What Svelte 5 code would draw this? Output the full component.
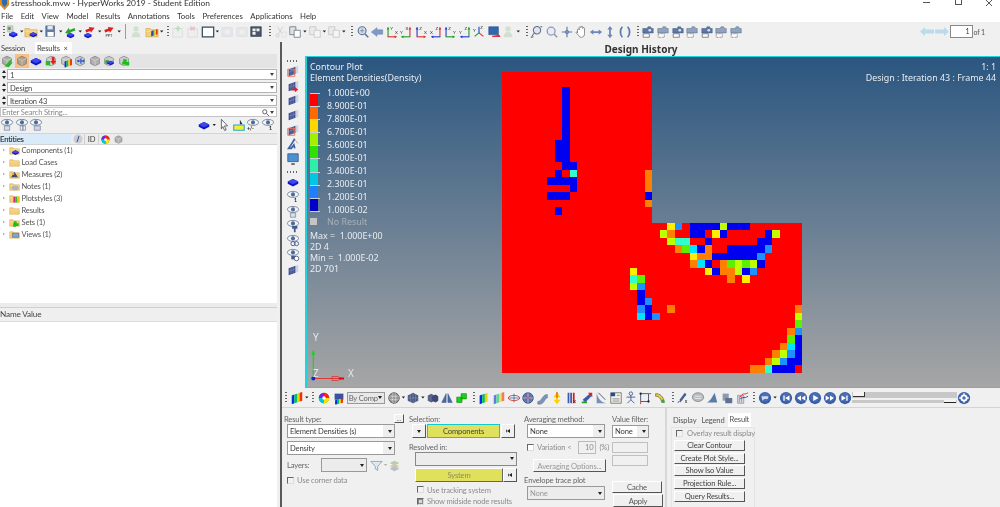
<script>
  // Small icon fragments, all drawn in a 16x16 box
  const cube = (c = '#9a9a9a') =>
    `<path d="M3 5l5-2.500L13 5v6l-5 2.500L3 11z" fill="${c}" stroke="#5c5c5c" stroke-width=".6"/><path d="M3 5l5 2.500L13 5M8 7.500v6" fill="none" stroke="#e8e8e8" stroke-width=".6"/>`;
  const blob = `<path d="M8 4.500l6 3V10l-6 3-6-3V7.500z" fill="#1414c8"/><path d="M8 4.500l6 3-6 3-6-3z" fill="#3a48ee"/>`;
  const folder = `<path d="M1 4h5l1 1.500h8v8H1z" fill="#f4cd76" stroke="#c99b3c" stroke-width=".6"/><path d="M1 7h14" stroke="#fbe6b0" stroke-width=".8"/>`;
  const eye = `<ellipse cx="8" cy="5" rx="6.400" ry="3.400" fill="#f4f6fa" stroke="#64748c" stroke-width=".9"/><circle cx="8" cy="5" r="2.300" fill="#4c6a9c"/>`;
  const axes = (a, b, la, lb) =>
    `<path d="M3.500 13.500V3" stroke="${a}" fill="none" stroke-width="1.300"/><path d="M2 5l1.500-3L5 5z" fill="${a}"/><path d="M3 13.500h9.500" stroke="${b}" stroke-width="1.300"/><path d="M11 12l3 1.500-3 1.500z" fill="${b}"/><text x="6" y="6" font-size="5" fill="#333">${la}</text><text x="11.500" y="10" font-size="5" fill="#333">${lb}</text>`;
  const mirrored = (a, b, la, lb) =>
    `<path d="M12.500 13.500V3" stroke="${a}" fill="none" stroke-width="1.300"/><path d="M11 5l1.500-3L14 5z" fill="${a}"/><path d="M13 13.500H3.500" stroke="${b}" stroke-width="1.300"/><path d="M5 12l-3 1.500L5 15z" fill="${b}"/><text x="7.500" y="6" font-size="5" fill="#333">${la}</text><text x="1" y="10" font-size="5" fill="#333">${lb}</text>`;
  const plate = `<path d="M3 6l8-3v8l-8 3z" fill="#3f4f90"/><path d="M5.700 5v8M8.300 4v8M3 9.500l8-3" stroke="#9aa6d0" stroke-width=".5"/><path d="M11 3l3-1v8l-3 1" fill="#cfd3de"/>`;
  const camera = `<path d="M2 4h5l1-2h3l1 2h2v5H2z" fill="#5c79a6" stroke="#3a4f70" stroke-width=".5"/><circle cx="10" cy="6" r="1.500" fill="#dde5f2"/><path d="M2.500 10h7v4h-7z" fill="#fff" stroke="#444" stroke-width=".7"/>`;
  const round = (inner) =>
    `<circle cx="8" cy="8" r="7" fill="#3a5fa8"/><circle cx="8" cy="7" r="5" fill="#5a7cc0" opacity=".5"/>${inner}`;
  const wheel = `<circle cx="8" cy="8" r="6" fill="#00c000"/><path d="M8 8V2a6 6 0 0 1 6 6z" fill="#ff2020"/><path d="M8 8h6a6 6 0 0 1-6 6z" fill="#ffe000"/><path d="M8 8v6a6 6 0 0 1-6-6z" fill="#00c8e0"/><path d="M8 8H2a6 6 0 0 1 6-6z" fill="#8020e0"/><circle cx="8" cy="8" r="2" fill="#fff"/>`;
  const bars = `<path d="M2 5l3-1v10l-3 1z" fill="#0030e0"/><path d="M5 4l3-1v10l-3 1z" fill="#00c060"/><path d="M8 3l3-1v10l-3 1z" fill="#f0d000"/><path d="M11 2l3-1v10l-3 1z" fill="#f03000"/>`;

  const icons = {
    model: `<path d="M3 1h6v7H3z" fill="#d7ddd3" stroke="#8a8f86" stroke-width=".5"/><circle cx="5" cy="4" r="2" fill="#60a060"/><g transform="translate(3 4) scale(.8)">${blob}</g>`,
    folderModel: `${folder}<g transform="translate(5 5) scale(.7)">${blob}</g>`,
    save: `<path d="M2 1h10v12H2z" fill="#5f7fa8" stroke="#3a4d6c" stroke-width=".6"/><path d="M4 1h6v4H4z" fill="#e4e8ee"/><path d="M4 8h7v5H4z" fill="#fff"/>`,
    arrowG: `<path d="M2 7l6-4v2.500h6v3H8V11z" fill="#2aa52a" transform="rotate(-20 8 7)"/><g transform="translate(3 6) scale(.7)">${blob}</g>`,
    arrowR: `<path d="M14 5L8 2v2H3v3h5v2z" fill="#e02020" transform="rotate(-20 8 6)"/><g transform="translate(0 6) scale(.7)">${blob}</g>`,
    ppt: `<path d="M14 5L8 2v2H3v3h5v2z" fill="#e02020" transform="rotate(-20 8 6)"/><text x="4" y="14" font-size="4.500" fill="#333">PPT</text>`,
    person: `<circle cx="8" cy="4.500" r="3" fill="#9cc49c"/><path d="M3 14c0-4 2-6 5-6s5 2 5 6z" fill="#9cc49c"/>`,
    folderColor: `${folder}<g transform="translate(6 4) scale(.6)">${bars}</g>`,
    plus: `<path d="M2 4h11v10H2z" fill="#e8efe8" stroke="#9ab09a" stroke-width=".7"/><path d="M8 1v6M5 4h6" stroke="#58b058" stroke-width="1.800"/>`,
    minus: `<path d="M2 4h11v10H2z" fill="#efe8e8" stroke="#b09a9a" stroke-width=".7"/><path d="M5 2l5 4M10 2L5 6" stroke="#d85858" stroke-width="1.800"/>`,
    frame: `<path d="M1.500 2.500h13v11h-13z" fill="#fff" stroke="#33475f" stroke-width="1.400"/>`,
    blank: `<path d="M2 3h12v10H2z" fill="#d4dae2" stroke="#a6aeb8" stroke-width=".7"/><path d="M6 6h4v4H6z" fill="#f2f4f6"/>`,
    panes: `<path d="M2 2h12v11H2z" fill="#4c5868" stroke="#222a36" stroke-width=".7"/><path d="M4 4h3.500v3H4zM8.500 4H12v3H8.500zM4 8h3.500v3H4z" fill="#eef2f6"/>`,
    cut: `<path d="M4 2l5 8M10 2L5 10" stroke="#8a8a8a"/><circle cx="4" cy="12" r="1.800" fill="none" stroke="#8a8a8a"/><path d="M9 8h5v6H9z" fill="#eee" stroke="#aaa" stroke-width=".6"/>`,
    copy: `<path d="M2 2h7v9H2z" fill="#dfe3e8" stroke="#59626e" stroke-width=".8"/><path d="M7 6h7v8H7z" fill="#fff" stroke="#59626e" stroke-width=".8"/>`,
    magnify: `<circle cx="7" cy="6.500" r="4.500" fill="#d4dce8" stroke="#5e7596" stroke-width="1.300"/><path d="M10 10l4 4" stroke="#5e7596" stroke-width="1.800"/><path d="M4.500 6.500h5M7 4v5" stroke="#5e7596" stroke-width=".7"/>`,
    back: `<path d="M1.500 8L8 3v2.500h6.500v5H8V13z" fill="#7f9ac8" stroke="#5f7aa8" stroke-width=".5"/>`,
    xyYX: axes('#20a020', '#e03030', 'Y', 'X'),
    yxXY: mirrored('#e03030', '#20a020', 'X', 'Y'),
    zxZX: axes('#2040d0', '#e03030', 'Z', 'X'),
    xzZX: mirrored('#e03030', '#2040d0', 'Z', 'X'),
    zyZY: axes('#2040d0', '#20a020', 'Z', 'Y'),
    yzZY: mirrored('#20a020', '#2040d0', 'Z', 'Y'),
    iso: `<path d="M8 9V2" stroke="#2040d0" stroke-width="1.300"/><path d="M8 9l-5 4" stroke="#20a020" stroke-width="1.300"/><path d="M8 9l5 4" stroke="#e03030" stroke-width="1.300"/><text x="9.500" y="5" font-size="5" fill="#333">Z</text><text x="1" y="8" font-size="5" fill="#333">Y</text>`,
    screenArrow: `<path d="M2 2h11v9H2z" fill="#2d68b0" stroke="#1c4274" stroke-width=".6"/><path d="M6 13h9l-2-2v1z" fill="#e02020" stroke="#e02020"/>`,
    zoomFit: `<circle cx="8" cy="6" r="4.200" fill="#dfe5ee" stroke="#60708a" stroke-width="1.200"/><path d="M5 9l-3 4M1 14l3-.5M12 2h2" stroke="#444" stroke-width="1"/>`,
    zoomBox: `<circle cx="7" cy="7" r="4.500" fill="#e8ecf2" stroke="#8a9ab4" stroke-width="1.500"/><path d="M10.500 10.500l3.500 3.500" stroke="#8a9ab4" stroke-width="1.800"/>`,
    cross: `<path d="M8 2v12M2 8h12" stroke="#5a7cac" stroke-width="1.300"/><circle cx="8" cy="8" r="2" fill="none" stroke="#5a7cac"/>`,
    hand: `<path d="M4 9V5.500a1 1 0 0 1 2 0V3a1 1 0 0 1 2 0v-.5a1 1 0 0 1 2 0V4a1 1 0 0 1 2 0v6c0 2-1 4-3.500 4S6 13 5 11.500L2.500 9c-.6-1 .8-1.600 1.500 0z" fill="#fff" stroke="#666" stroke-width=".8"/>`,
    leftRight: `<path d="M1 8l4-3v2h6V5l4 3-4 3V9H5v2z" fill="#6a88b8"/>`,
    upDown: `<path d="M8 1l3 4H9v6h2l-3 4-3-4h2V5H5z" fill="#6a88b8"/>`,
    rotate: `<path d="M5 2C2 5 2 11 5 14M11 2c3 3 3 9 0 12" fill="none" stroke="#5a7cac" stroke-width="2"/>`,
    camera,
    cameraPlain: `<path d="M2 4h5l1-2h3l1 2h2v5H2z" fill="#8fa3c0" stroke="#4a5c78" stroke-width=".5"/><path d="M2.500 10h7v4h-7z" fill="#fff" stroke="#444" stroke-width=".7" stroke-dasharray="1 .6"/>`,
    check: `${cube('#a8b0a4')}<path d="M5 14l8-8-1 5 3-2-5 6z" fill="#30b030"/>`,
    cubeOn: cube('#b0a090'),
    cubeBlob: blob,
    cubeDown: `${cube('#c8c8c8')}<path d="M9 3h3v5h2l-3.500 4L7 8h2z" fill="#e02020"/><path d="M2 8h5v5H2z" fill="#20c020"/>`,
    colorCube: `${cube('#c8c8c8')}<g transform="translate(5 5) scale(.7)">${bars}</g>`,
    tree: `${cube('#c0c4c8')}<path d="M6 8h6M9 5v6" stroke="#2a5ad0" stroke-width="1.400"/><circle cx="6" cy="8" r="1.300" fill="#2a5ad0"/><circle cx="12" cy="8" r="1.300" fill="#2a5ad0"/>`,
    cubeGrey: cube('#b0b0b0'),
    cubeMix: `${cube('#c8c8c8')}<circle cx="6" cy="9" r="2.500" fill="#40a040"/><g transform="translate(5 5) scale(.6)">${blob}</g>`,
    cubeGreen: `${cube('#c8c8c8')}<path d="M7 6h4v3h3v4h-4v-1H6V9h1z" fill="#18c018"/>`,
    eye1: `${eye}<path d="M5 9h6v5H5z" fill="#d8dfe8" stroke="#4c6080" stroke-width=".6"/>`,
    eye2: `${eye}<path d="M6 9h3v5H6zM9 9h3v5H9z" fill="#eef1f5" stroke="#5a6a84" stroke-width=".6"/>`,
    eye3: `${eye}<path d="M6 9h7v5H6z" fill="#cdd6e2" stroke="#5a6a84" stroke-width=".6"/>`,
    eyeSolid: `${eye}<path d="M7 8h6v3h-2v4H9v-4H7z" fill="#45598a"/>`,
    eyeRings: `${eye}<circle cx="8" cy="11" r="2.400" fill="none" stroke="#45598a"/><circle cx="12" cy="11" r="2.400" fill="none" stroke="#45598a"/>`,
    eyeStack: `${eye}<path d="M6 9h5v4H6z" fill="#45598a"/><circle cx="12" cy="12" r="2.600" fill="#fff" stroke="#45598a"/>`,
    eyeOne: `${eye}<text x="9" y="14" font-size="6" font-weight="700" fill="#222">1</text>`,
    eyePm: `${eye}<text x="1" y="14" font-size="6" font-weight="700" fill="#222">+/-</text>`,
    cursor: `<path d="M5 1.500l7 7.500H8.500l2 4.500-1.800.8-2-4.500L5 12.500z" fill="#fff" stroke="#445" stroke-width=".9"/>`,
    yellowBox: `<path d="M2 8h12v6H2z" fill="#f4ee30" stroke="#20a8d8" stroke-width="1.200"/><path d="M9 2l3 5H9z" fill="#20303a"/>`,
    plateOutline: `${plate}<path d="M2 6h8v8H2z" fill="none" stroke="#f07050" stroke-width="1.100"/>`,
    plateArrow: `${plate}<path d="M6 11h4V9l4 3-4 3v-2H6z" fill="#e02020"/>`,
    plate,
    runner: `<path d="M10 2l-3 5-4 6h3l3-4 1 4" fill="none" stroke="#3b62a8" stroke-width="2"/><path d="M10 3l4 5" stroke="#e04040" stroke-dasharray="1 1"/>`,
    monitor: `<path d="M2 2h12v9H2z" fill="#4c90d0" stroke="#2c4c70" stroke-width=".8"/><path d="M6 13h4v1.500H6z" fill="#334"/>`,
    colorbars: bars,
    wheel,
    stack: `<path d="M3 3h10v7H3z" fill="#3c4fa0"/><g transform="translate(2 8) scale(.75 .5)">${bars}</g>`,
    meshSphere: `<circle cx="8" cy="8" r="6" fill="#d8d8d8" stroke="#555"/><path d="M2 8h12M8 2v12M3.500 4.500h9M3.500 11.500h9M4.500 3v10M11.500 3v10" stroke="#555" stroke-width=".6"/>`,
    solidSphere: `<path d="M8 2l6 3v6l-6 3-6-3V5z" fill="#4a5a80"/><path d="M2 8h12M8 2v12M5 3.500v9M11 3.500v9" stroke="#9aa8c4" stroke-width=".5"/>`,
    blueStack: `<path d="M2 5l4-2 4 2v6l-4 2-4-2z" fill="#5a6488"/><path d="M7 6l4-2 3 2v5l-3 2-4-2z" fill="#3c4a78"/>`,
    split: `<path d="M7 3v10H2zM9 3v10h5z" fill="#4a6ab0" stroke="#28406c" stroke-width=".5"/>`,
    greenCubes: `<path d="M2 7h6v6H2zM7 3h6v6H7z" fill="#14d414" stroke="#0a800a" stroke-width=".7"/>`,
    barsRaised: `<path d="M3 5l3-1v10l-3 1z" fill="#0030e0"/><path d="M6 4l3-1v10l-3 1z" fill="#00c060"/><path d="M9 3l3-1v10l-3 1z" fill="#f0d000"/>`,
    barsPale: `<g opacity=".6">${bars}</g>`,
    disc: `<ellipse cx="8" cy="8" rx="6.500" ry="3" fill="#e8eef6" stroke="#e04030"/><path d="M8 3v10M2 8h12" stroke="#3a5a98" stroke-width=".8"/>`,
    ball: `<circle cx="8" cy="8" r="6" fill="#5a78b8" stroke="#34507c"/><path d="M2 8h12M8 2v12" stroke="#dde" stroke-width=".7"/><path d="M4 5l8 6M4 11l8-6" stroke="#e04030" stroke-width=".7"/>`,
    pipe: `<path d="M2 12c5 0 5-8 11-8v4c-3 0-3 6-8 7H2z" fill="#7c94bc" stroke="#4a5e80" stroke-width=".5"/>`,
    bolt: `<path d="M8 1l4 6H9v3h3l-4 5-4-5h3V7H4z" fill="#ffd000"/><path d="M8 1v7" stroke="#e02020"/>`,
    barsX: `<path d="M3 2h2v12H3zM6 2h2v12H6z" fill="#3c5ab0"/><path d="M9 2h2v12H9z" fill="#d02020"/><text x="9.500" y="14" font-size="5" fill="#222">X</text>`,
    arrowsMix: `<path d="M3 10l8-7 2 3-7 7z" fill="#3c5ab0"/><path d="M9 2h5v5z" fill="#e02020"/><path d="M2 12h6v2H2z" fill="#20a020"/>`,
    dish: `<path d="M3 2c2 8 6 11 11 12L3 14z" fill="#7a90b4"/><path d="M5 2l8 8" stroke="#3a4c70"/>`,
    note: `<path d="M2 2h12v12H2z" fill="#f2f2ea" stroke="#555" stroke-width=".8"/><path d="M2 2h5v4H2z" fill="#2a4a90"/><path d="M9 5h3M4 9h8M4 11.500h8" stroke="#666" stroke-width=".8"/>`,
    stickman: `<circle cx="9" cy="3" r="2" fill="none" stroke="#3a5a98"/><path d="M9 5v5l-4 4M9 10l4 4M4 7h10" fill="none" stroke="#3a5a98"/>`,
    crossAxes: `<path d="M3 3h9v9H3z" fill="none" stroke="#3c4c70"/><circle cx="3" cy="3" r="1.300" fill="#223"/><circle cx="12" cy="12" r="1.300" fill="#223"/><path d="M12 3h3M3 12v3" stroke="#e02020"/>`,
    ramp: `<path d="M3 3c5 0 9 3 10 10h-3C9 9 7 6 3 6z" fill="#e8d030" stroke="#4c4c4c" stroke-width=".7"/><path d="M10 13h3l-.3-3H9.700z" fill="#30b030"/>`,
    plotX: `<path d="M10 2l-6 8 1 3 7-9z" fill="#44608c"/><path d="M2 13l2-1" stroke="#222"/><text x="10" y="14" font-size="6" fill="#222">x</text>`,
    bubble: `<ellipse cx="8" cy="7" rx="6.500" ry="5" fill="#b8bcc2" stroke="#8a8e94"/><path d="M4 6h8M4 8.500h8" stroke="#f2f2f2" stroke-width=".8"/>`,
    cone: `<path d="M2 13c4-1 6-6 9-11l3 11z" fill="#5a7aa8"/>`,
    printer: `<path d="M3 3h7v8H3z" fill="#8c9ab0"/><path d="M6 8h8v6H6z" fill="#607090"/>`,
    trash: `<path d="M3 5h7v9H3z" fill="#d8dce4" stroke="#667" stroke-width=".6"/><path d="M5 6v7M7.500 6v7" stroke="#667" stroke-width=".6"/><path d="M6 7c3-6 5-2 9-5" fill="none" stroke="#e02020"/><path d="M6 9c3-3 5 0 9-3" fill="none" stroke="#2040d0"/>`,
    camBall: round(`<path d="M4 6h8l-1 3H7l-2 2z" fill="#fff" opacity=".75"/>`),
    first: round(`<path d="M5 5h1.500v6H5zM12 5v6L7 8z" fill="#fff"/>`),
    rewind: round(`<path d="M8 5v6L3.500 8zM13 5v6L8.500 8z" fill="#fff"/>`),
    play: round(`<path d="M6 4.500v7L12 8z" fill="#fff"/>`),
    forward: round(`<path d="M8 5v6l4.500-3zM3 5v6l4.500-3z" fill="#fff"/>`),
    last: round(`<path d="M11 5H9.500v6H11zM4 5v6l5-3z" fill="#fff"/>`),
    gear: round(`<circle cx="8" cy="8" r="3" fill="none" stroke="#fff" stroke-width="2" /><path d="M8 2.500v2M8 11.500v2M2.500 8h2M11.500 8h2" stroke="#fff" stroke-width="1.500"/>`),
    treeComponents: `${folder}<g transform="translate(3 4) scale(.8)">${blob}</g>`,
    treeFolder: folder,
    treeMeasures: `${folder}<path d="M3 12l5-8 5 8z" fill="#3a4a70"/><circle cx="6" cy="7" r="1.800" fill="#eab040"/>`,
    treeNotes: `${folder}<ellipse cx="9" cy="10" rx="5" ry="3.500" fill="#b0b4ba"/>`,
    treePlot: `${folder}<g transform="translate(5 4) scale(.7)"><path d="M2 2h4v12H2z" fill="#e02090"/><path d="M6 2h4v12H6z" fill="#20c030"/><path d="M10 2h4v12h-4z" fill="#f0c000"/></g>`,
    treeSets: `${folder}<path d="M7 6h4v3h3v4h-4v1H6V9h1z" fill="#18c018"/>`,
    treeViews: `${folder}<path d="M5 6h9v6H5z" fill="#7aa8d8" stroke="#345" stroke-width=".6"/>`,
    funnel: `<path d="M1 3h14L9.500 9v5l-3-2V9z" fill="#dce8f2" stroke="#7ca0bc"/>`,
    layers: `<path d="M8 2l6 3-6 3-6-3z" fill="#b8ccb0"/><path d="M8 6l6 3-6 3-6-3z" fill="#d4c8a8"/><path d="M8 9l6 3-6 3-6-3z" fill="#b4c0cc"/>`
  };

  const topBar = [
    '|',
    'model', 'v', 'folderModel', 'v', 'save', 'v', 'arrowG', 'v', 'arrowR', 'v', 'ppt', 'v', '!',
    'person~', 1.4, 'folderColor', 'v', '|',
    'plus~', 'minus~', 'frame', 'v', 'blank~', 'blank~', 'panes', 2.7, '|',
    'cut~', 'copy', 'v', 'copy~', 'v', 'copy~', 'v', 2, '|',
    'magnify', 'back', 'xyYX', 'yxXY', 'zxZX', 'xzZX', 'zyZY', 'yzZY', 'iso', 'screenArrow', 'person~', 'v', 2.4, '|',
    'zoomFit', 'zoomBox', 'cross', 'hand', 'leftRight', 'upDown', 'rotate', 1.8, '|',
    'camera', 'cameraPlain', 'camera', 'cameraPlain', 'camera', 'cameraPlain', 'cameraPlain'
  ];

  const plotBarA = [
    '|', .7, 'colorbars', 'v', '|', .5, 'wheel', 'stack'
  ];
  const plotBarB = [
    1.7, 'meshSphere', 'v', 'solidSphere', 'v', 'blueStack', 'split', 'greenCubes', 1, '|',
    'barsRaised', 'barsPale', 'disc', 'ball', 'pipe', 'bolt', 'barsX', 'arrowsMix', 'dish', 'note', 'stickman', 'crossAxes', 'ramp', 2.2, '|',
    'plotX', 'bubble', 'cone', 'printer', 'trash', 2, '|',
    'camBall', 'v', 1.4, 'first', 'rewind', 'play', 'forward', 'last'
  ];

  const sideIcons = ['check', 'cubeOn', 'cubeBlob', 'cubeDown', 'colorCube', 'tree', 'cubeGrey', 'cubeMix', 'cubeGreen'];
  const viewIcons = ['plateOutline', 'plateArrow', 'plate', 'plate', 'plateOutline', 'runner', 'monitor'];
  const showIcons = ['cubeBlob', 'eyeOne', 'eye1', 'eyeSolid', 'eyeRings', 'eyeStack', 'plate'];

  const tree = [
    ['treeComponents', 'Components (1)'],
    ['treeFolder', 'Load Cases'],
    ['treeMeasures', 'Measures (2)'],
    ['treeNotes', 'Notes (1)'],
    ['treePlot', 'Plotstyles (3)'],
    ['treeFolder', 'Results'],
    ['treeSets', 'Sets (1)'],
    ['treeViews', 'Views (1)']
  ];

  const legend = [
    ['1.000E+00', '#ff0000'],
    ['8.900E-01', '#ff6a00'],
    ['7.800E-01', '#ffd800'],
    ['6.700E-01', '#a0f000'],
    ['5.600E-01', '#30e000'],
    ['4.500E-01', '#2cf0a8'],
    ['3.400E-01', '#00c8e4'],
    ['2.300E-01', '#1e80ff'],
    ['1.200E-01', '#0000c8'],
    ['1.000E-02', null]
  ];

  const shades = {
    r: '#ff0000', o: '#ff8000', y: '#ffee00', l: '#c0ff00', g: '#5cf000',
    t: '#33ffcc', c: '#00e5ff', a: '#1e90ff', b: '#0000f0'
  };

  // Result cells as [row, first column, one letter per cell]
  const runs = [
    [2, 8, 'b'], [3, 8, 'b'], [4, 8, 'b'], [5, 8, 'b'], [6, 8, 'b'], [7, 8, 'b'], [8, 8, 'b'],
    [9, 7, 'bb'], [10, 7, 'bb'], [11, 7, 'bb'], [12, 8, 'bb'],
    [13, 7, 'b'], [13, 9, 't'], [13, 19, 'o'],
    [14, 6, 'bbbb'], [14, 19, 'o'],
    [15, 9, 'b'], [15, 19, 'o'],
    [16, 6, 'bbb'], [16, 19, 'b'],
    [17, 19, 'o'], [18, 7, 'b'],
    [20, 22, 'yarbbbblbbb'],
    [21, 21, 'lo'], [21, 25, 'bbryb'], [21, 35, 'bl'],
    [22, 22, 'ltt'], [22, 27, 'b'], [22, 34, 'bb'],
    [23, 23, 'ogcbo'], [23, 30, 'bbbbba'],
    [24, 25, 'yoo'], [24, 28, 'bbbbbb'], [24, 34, 'a'],
    [25, 25, 'ocbroglglb'],
    [26, 17, 'y'], [26, 27, 'yboolba'],
    [27, 17, 'tg'], [27, 30, 'o'], [27, 32, 'y'],
    [28, 17, 'la'], [29, 18, 'b'], [30, 18, 'ba'],
    [31, 18, 'ab'], [31, 22, 'o'], [31, 39, 'o'],
    [32, 18, 'cba'], [32, 39, 'l'], [33, 39, 'g'],
    [34, 38, 'oa'], [35, 38, 'gb'], [36, 37, 'ocb'],
    [37, 36, 'olab'], [38, 35, 'olabb'], [39, 33, 'ootbbbr']
  ];
  const cells = runs.flatMap(([row, col, text]) =>
    [...text].map((ch, i) => ({ row, col: col + i, fill: shades[ch] }))
  );

  const plotButtons = ['Clear Contour', 'Create Plot Style...', 'Show Iso Value', 'Projection Rule...', 'Query Results...'];
</script>

{#snippet icon(name, size = 14)}
  <svg class="ico" class:off={name.endsWith('~')} width={size} height={size} viewBox="0 0 16 16">
    {@html icons[name.replace('~', '')]}
  </svg>
{/snippet}

{#snippet bar(items)}
  {#each items as item}
    {#if typeof item === 'number'}
      <span style="width:{item}px" class="gap"></span>
    {:else if item === '|'}
      <span class="grip"></span>
    {:else if item === '!'}
      <span class="sep"></span>
    {:else if item === 'v'}
      <span class="drop"></span>
    {:else}
      <span class="slot">{@render icon(item)}</span>
    {/if}
  {/each}
{/snippet}

{#snippet combo(text, cls = '')}
  <div class="combo {cls}"><span>{text}</span><i></i></div>
{/snippet}

{#snippet check(text, cls = '')}
  <div class="check-row {cls}"><span class="box"></span>{text}</div>
{/snippet}

<div class="app">
  <header class="titlebar">
    <svg width="9" height="10" viewBox="0 0 9 10"><path d="M0 0h9v5L4.500 10 0 5z" fill="#e08a20"/><path d="M2 0h5v4L4.500 7 2 4z" fill="#2f6bb0"/></svg>
    <span>stresshook.mvw - HyperWorks 2019 - Student Edition</span>
    <div class="winbtns">
      <span class="w-min"></span>
      <span class="w-max"></span>
      <svg class="w-close" width="8" height="6" viewBox="0 0 8 6"><path d="M1 0l6 6M7 0L1 6" stroke="#555" fill="none" /></svg>
    </div>
  </header>

  <nav class="menubar">
    {#each ['File', 'Edit', 'View', 'Model', 'Results', 'Annotations', 'Tools', 'Preferences', 'Applications', 'Help'] as m}
      <span>{m}</span>
    {/each}
  </nav>

  <div class="toolbar">
    {@render bar(topBar)}
    <div class="pager">
      <svg width="14" height="9" viewBox="0 0 14 9"><path d="M0 4.500L5 0v2.500h9v4H5V9z" fill="#b8dcec"/></svg>
      <svg width="14" height="9" viewBox="0 0 14 9"><path d="M14 4.500L9 0v2.500H0v4h9V9z" fill="#b8dcec"/></svg>
      <div class="page-input">1</div>
      <span>of 1</span>
    </div>
  </div>

  <div class="main">
    <aside class="left">
      <div class="tabs">
        <span class="tab">Session</span>
        <span class="tab active">Results <b>×</b></span>
      </div>
      <div class="side-icons">
        {#each sideIcons as s}
          <span class="slot" class:picked={s === 'cubeOn'}>{@render icon(s)}</span>
        {/each}
      </div>
      {#each ['1', 'Design', 'Iteration 43'] as row}
        <div class="spin-row">
          <span class="spin"><i></i><i></i></span>
          <div class="pick"><span>{row}</span><em></em></div>
        </div>
      {/each}
      <div class="search">
        <span>Enter Search String...</span>
        <svg width="7" height="7" viewBox="0 0 8 8"><circle cx="3.200" cy="3.200" r="2.400" fill="none" stroke="#555"/><path d="M5 5l3 3" stroke="#555"/></svg>
        <em></em>
      </div>
      <div class="eye-row">
        <span class="slot">{@render icon('eye1')}</span>
        <span class="slot">{@render icon('eye2')}</span>
        <span class="slot">{@render icon('eye3')}</span>
        <span class="grow"></span>
        <span class="slot">{@render icon('cubeBlob')}</span><span class="drop"></span>
        <span class="slot">{@render icon('cursor')}</span>
        <span class="slot">{@render icon('yellowBox')}</span>
        <span class="slot">{@render icon('eyePm')}</span>
        <span class="slot">{@render icon('eyeOne')}</span>
      </div>
      <div class="entities-head">
        <span class="col-name">Entities</span>
        <span class="col-i"><svg width="10" height="10" viewBox="0 0 10 10"><circle cx="5" cy="5" r="4.500" fill="#c8ccd4"/><path d="M6 2L4 8" stroke="#3a50a0"/></svg></span>
        <span class="col-id">ID</span>
        <span class="col-c">{@render icon('wheel', 11)}</span>
        <span class="col-c">{@render icon('cubeGrey', 11)}</span>
      </div>
      <ul class="tree">
        {#each tree as [ico, label]}
          <li><span class="tri"></span>{@render icon(ico, 11)}<span>{label}</span></li>
        {/each}
      </ul>
      <div class="sash"></div>
      <div class="name-head">Name Value</div>
      <div class="name-body"></div>
    </aside>

    <section class="right">
      <h1>Design History</h1>
      <div class="stage">
        <div class="vbar">
          <span class="grip-h"></span>
          {#each viewIcons as v}
            <span class="slot-v">{@render icon(v)}</span>
          {/each}
          <span class="grip-h second"></span>
          {#each showIcons as v}
            <span class="slot-v">{@render icon(v)}</span>
          {/each}
        </div>

        <div class="viewport">
          <div class="readout">
            <div class="tl">
              <p>Contour Plot</p>
              <p>Element Densities(Density)</p>
              <div class="legend">
                {#each legend as [val, col]}
                  <div class="leg-row">
                    {#if col}<span class="swatch" style="background:{col}"></span>{/if}
                    <span class="tick"></span>
                    <span class="val">{val}</span>
                  </div>
                {/each}
              </div>
              <div class="noresult"><span></span>No Result</div>
              <p>Max =&nbsp; 1.000E+00</p>
              <p>2D 4</p>
              <p>Min =&nbsp; 1.000E-02</p>
              <p>2D 701</p>
            </div>
            <div class="tr">
              <p>1: 1</p>
              <p>Design : Iteration 43 : Frame 44</p>
            </div>
          </div>

          <svg class="part" width="300" height="301" viewBox="0 0 40 40" preserveAspectRatio="none" shape-rendering="crispEdges">
            <path d="M0 0h20v20h20v20H0z" fill="#ff0000" />
            {#each cells as c}
              <rect x={c.col} y={c.row} width="1" height="1" fill={c.fill} />
            {/each}
          </svg>

          <div class="triad">
            <span class="t-y">Y</span>
            <span class="t-z">Z</span>
            <span class="t-x">X</span>
            <svg width="40" height="52" viewBox="0 0 40 52">
              <path d="M3.300 48.500V22" stroke="#20d020" stroke-width="1.200" />
              <path d="M1.500 25l1.800-6 1.800 6z" fill="#20d020" />
              <path d="M3.300 48.500H33" stroke="#d83a3a" stroke-width="1" />
              <path d="M22 46.500h6l3 2-3 2h-6z" fill="none" stroke="#d83a3a" stroke-width=".8" />
              <path d="M29 47.500h5v2h-5z" fill="#f00000" />
              <circle cx="3.300" cy="48.500" r="2" fill="#2020d0" />
            </svg>
          </div>
        </div>
      </div>

      <div class="plotbar">
        {@render bar(plotBarA)}
        <div class="bycomp"><span>By Comp</span><i></i></div>
        {@render bar(plotBarB)}
        <div class="slider">
          <div class="rail"><i class="thumb-a"></i></div>
          <div class="rail thin"><i class="thumb-b"></i></div>
        </div>
        <span class="slot">{@render icon('gear')}</span>
      </div>

      <div class="panel">
        <div class="col col-result">
          <div class="lab-row"><label>Result type:</label><button class="tiny">...</button></div>
          {@render combo('Element Densities (s)', 'wide')}
          {@render combo('Density', 'wide second')}
          <div class="layers">
            <label>Layers:</label>
            {@render combo('', 'off layer-box')}
            {@render icon('funnel', 13)}
            <span class="drop off"></span>
            {@render icon('layers', 13)}
          </div>
          {@render check('Use corner data', 'dim corner')}
        </div>

        <div class="col col-select">
          <label>Selection:</label>
          <div class="sel-row">
            <button class="bev arrow-btn"><i></i></button>
            <button class="yellow active">Components</button>
            <button class="bev mark"><i></i></button>
          </div>
          <label class="resolved">Resolved in:</label>
          {@render combo('', 'off res-combo')}
          <div class="sel-row sys">
            <button class="yellow dim">System</button>
            <button class="bev mark"><i></i></button>
          </div>
          {@render check('Use tracking system', 'dim tracking')}
          {@render check('Show midside node results', 'dim ticked mid')}
        </div>

        <div class="col col-avg">
          <label>Averaging method:</label>
          {@render combo('None', 'avg')}
          <div class="variation">
            <span class="box"></span><span>Variation &lt;</span>
            <span class="num">10</span><span>(%)</span>
          </div>
          <button class="bev avg-opts">Averaging Options...</button>
          <label class="env">Envelope trace plot</label>
          {@render combo('None', 'avg off env-combo')}
        </div>

        <div class="col col-filter">
          <label>Value filter:</label>
          {@render combo('None', 'vf')}
          <span class="blank-in first"></span>
          <span class="blank-in"></span>
          <button class="bev cache">Cache</button>
          <button class="bev apply">Apply</button>
        </div>

        <div class="col col-tabs">
          <div class="tabrow">
            <span>Display</span><span>Legend</span><span class="on">Result</span>
          </div>
          <div class="tabbody">
            {@render check('Overlay result display', 'dim overlay')}
            {#each plotButtons as b}
              <button class="bev plot-btn">{b}</button>
            {/each}
          </div>
        </div>
      </div>
    </section>
  </div>
</div>

<style>
  :global(body) {
    margin: 0;
  }

  .app {
    width: 1000px;
    height: 507px;
    overflow: hidden;
    display: flex;
    flex-direction: column;
    background: #f0f0f0;
    color: #3c3c3c;
    font-family: Lato, "Noto Sans", sans-serif;
    font-size: 7.6px;
    letter-spacing: -0.15px;
    /* the source is a rescaled capture, everything in it is slightly soft */
    filter: blur(0.35px);
  }

  p {
    margin: 0;
  }

  .ico {
    display: block;
    flex: none;
    overflow: visible;
  }

  .ico.off {
    opacity: 0.35;
  }

  /* window chrome */
  .titlebar {
    flex: none;
    height: 10px;
    display: flex;
    align-items: flex-start;
    gap: 2px;
    overflow: hidden;
    background: #fff;
    font-size: 8.4px;
    line-height: 12px;
    letter-spacing: 0;
    color: #333;
  }

  .titlebar > span {
    margin-top: -3px;
  }

  .winbtns {
    margin-left: auto;
    position: relative;
    width: 77px;
    height: 10px;
  }

  .w-min {
    position: absolute;
    left: 0;
    top: 2px;
    width: 7px;
    height: 1px;
    background: #555;
  }

  .w-max {
    position: absolute;
    left: 32px;
    top: -2px;
    width: 5px;
    height: 5px;
    border: 1px solid #555;
  }

  .w-close {
    position: absolute;
    left: 62px;
    top: 0;
  }

  .menubar {
    flex: none;
    height: 12px;
    display: flex;
    align-items: center;
    gap: 7.5px;
    padding-left: 1px;
    background: #fff;
    font-size: 7.8px;
    letter-spacing: 0;
    color: #333;
  }

  .toolbar {
    flex: none;
    height: 20px;
    display: flex;
    align-items: center;
    box-sizing: border-box;
    padding-bottom: 1px;
    background: #f0f0f0;
  }

  .toolbar > .grip:first-child {
    width: 4.7px;
    background-position: right top;
  }

  .slot {
    flex: none;
    width: 14.6px;
    height: 14px;
    display: flex;
    align-items: center;
    justify-content: center;
  }

  .gap {
    flex: none;
  }

  .grip {
    flex: none;
    width: 7px;
    height: 13px;
    background: radial-gradient(circle, #666 0.6px, transparent 0.9px) center top / 2px 3px repeat-y;
  }

  .sep {
    flex: none;
    width: 7px;
    height: 15px;
    background: linear-gradient(#9a9a9a, #9a9a9a) center / 1px 100% no-repeat;
  }

  .drop {
    flex: none;
    width: 4.9px;
    height: 5px;
    background: #222;
    clip-path: polygon(0.8px 1.5px, 4.2px 1.5px, 2.5px 3.6px);
  }

  .drop.off {
    opacity: 0.3;
  }

  .pager {
    margin-left: auto;
    display: flex;
    align-items: center;
    gap: 1px;
    padding-right: 15px;
    font-size: 7px;
    color: #555;
  }

  .page-input {
    width: 23px;
    height: 13px;
    box-sizing: border-box;
    border: 1px solid #888;
    background: #fff;
    text-align: right;
    padding-right: 2px;
    line-height: 11px;
    color: #333;
  }

  .main {
    flex: 1;
    display: flex;
    min-height: 0;
  }

  /* left browser column */
  .left {
    flex: none;
    width: 277px;
    display: flex;
    flex-direction: column;
    padding-right: 3px;
    border-right: 2px solid #5a5a5a;
  }

  .tabs {
    height: 12px;
    display: flex;
    align-items: flex-end;
    color: #444;
  }

  .tab {
    box-sizing: border-box;
    padding-left: 1px;
    line-height: 12px;
    width: 35px;
  }

  .tab.active {
    background: #fff;
    padding-left: 2px;
    width: 37px;
    white-space: nowrap;
  }

  .tab b {
    font-weight: 400;
    margin-left: 2px;
  }

  .side-icons {
    height: 14px;
    display: flex;
    align-items: center;
    background: #e4e4e4;
  }

  .picked {
    background: #f6c08a;
  }

  .spin-row {
    height: 13px;
    display: flex;
    align-items: center;
  }

  .spin {
    width: 7px;
    height: 11px;
    display: flex;
    flex-direction: column;
    justify-content: space-around;
    align-items: center;
  }

  .spin i {
    width: 0;
    height: 0;
    border-left: 2.5px solid transparent;
    border-right: 2.5px solid transparent;
    border-bottom: 3px solid #222;
  }

  .spin i + i {
    border-bottom: 0;
    border-top: 3px solid #222;
  }

  .pick {
    flex: 1;
    height: 11px;
    display: flex;
    align-items: center;
    justify-content: space-between;
    box-sizing: border-box;
    border: 1px solid #b4b4b4;
    background: #fff;
    padding: 0 2px;
    color: #444;
  }

  em {
    display: block;
    width: 0;
    height: 0;
    border-left: 2px solid transparent;
    border-right: 2px solid transparent;
    border-top: 3px solid #444;
  }

  .search {
    height: 10px;
    display: flex;
    align-items: center;
    gap: 1px;
    box-sizing: border-box;
    border: 1px solid #c4c4c4;
    background: #fff;
    padding: 0 2px 0 1px;
    color: #888;
  }

  .search span {
    flex: 1;
  }

  .eye-row {
    height: 16px;
    display: flex;
    align-items: center;
    padding-right: 2px;
  }

  .grow {
    flex: 1;
  }

  .entities-head {
    height: 12px;
    display: flex;
    align-items: center;
    box-sizing: border-box;
    background: #ececec;
    border: 1px solid #d4d4d4;
    border-width: 1px 0;
  }

  .col-name {
    width: 71px;
    line-height: 10px;
    background: #d9ebf9;
    color: #333;
    -webkit-text-stroke: 0.15px #333;
  }

  .col-i,
  .col-id,
  .col-c {
    height: 100%;
    display: flex;
    align-items: center;
    justify-content: center;
    width: 13px;
    border-right: 1px solid #d0d0d0;
  }

  .col-c {
    border-right: 0;
  }

  .tree {
    flex: none;
    height: 158px;
    margin: 0;
    padding: 0;
    list-style: none;
    background: #fff;
    color: #555;
  }

  .tree li {
    height: 12px;
    display: flex;
    align-items: center;
    gap: 2px;
    padding-left: 2.5px;
    position: relative;
    top: -1px;
  }

  .tri {
    width: 0;
    height: 0;
    border-left: 2px solid #999;
    border-top: 1.5px solid transparent;
    border-bottom: 1.5px solid transparent;
    margin-right: 2px;
  }

  .sash {
    height: 4px;
    background: #ececec;
    border-bottom: 1px solid #d0d0d0;
  }

  .name-head {
    height: 13px;
    line-height: 13px;
    background: #efefef;
    border-bottom: 1px solid #ddd;
    font-size: 8.2px;
    color: #444;
  }

  .name-body {
    flex: 1;
    background: #fff;
  }

  /* graphics area */
  .right {
    flex: 1;
    min-width: 0;
    display: flex;
    flex-direction: column;
  }

  h1 {
    flex: none;
    margin: 0;
    height: 14px;
    line-height: 14px;
    font-family: "Noto Sans", sans-serif;
    font-size: 10px;
    font-weight: 700;
    letter-spacing: 0;
    text-align: center;
    color: #333;
  }

  .stage {
    flex: none;
    height: 332px;
    display: flex;
  }

  .vbar {
    flex: none;
    width: 23px;
    padding-top: 1px;
    display: flex;
    flex-direction: column;
    align-items: center;
    padding-right: 2px;
    box-sizing: border-box;
  }

  .grip-h {
    width: 13px;
    height: 7px;
    flex: none;
    background: radial-gradient(circle, #666 0.6px, transparent 0.9px) left center / 3px 2px repeat-x;
  }

  .grip-h.second {
    margin-top: 2px;
  }

  .slot-v {
    height: 14.6px;
    flex: none;
    display: flex;
    align-items: center;
  }

  .viewport {
    flex: 1;
    position: relative;
    box-sizing: border-box;
    border: solid #1fd4dc;
    border-width: 1px 0 1px 2px;
    background: linear-gradient(#2b5680, #a6a6a6);
    color: #e8edf2;
    font-family: "Noto Sans", sans-serif;
    font-size: 8.9px;
    line-height: 11px;
    letter-spacing: 0;
  }

  .readout {
    display: flex;
    justify-content: space-between;
    padding: 4px 4px 0 3px;
  }

  .tr {
    text-align: right;
  }

  .legend {
    margin-top: 10px;
  }

  .leg-row {
    position: relative;
    height: 13.1px;
    display: flex;
    padding-left: 17px;
    line-height: 1;
  }

  .tick {
    position: absolute;
    left: 0;
    top: 0;
    width: 10px;
    height: 1px;
    background: #c8d0da;
  }

  .swatch {
    position: absolute;
    left: 0;
    top: 0;
    width: 7.5px;
    height: 13.1px;
  }

  .val {
    margin-top: -4.5px;
  }

  .noresult {
    display: flex;
    align-items: center;
    gap: 10px;
    color: #a8b0b8;
    height: 11px;
    margin-top: -8px;
    margin-bottom: 3px;
  }

  .noresult span {
    width: 7px;
    height: 7px;
    background: #c4c4c4;
  }

  .part {
    position: absolute;
    left: 194.7px;
    top: 14.6px;
  }

  .triad {
    position: absolute;
    left: 3px;
    top: 273px;
    width: 48px;
    height: 52px;
  }

  .triad span {
    position: absolute;
    font-size: 10px;
    color: #e4e6e8;
  }

  .t-y {
    left: 3px;
    top: 2px;
  }

  .t-z {
    left: 3px;
    top: 38px;
  }

  .t-x {
    left: 38px;
    top: 38px;
  }

  .plotbar {
    flex: none;
    height: 20px;
    display: flex;
    align-items: center;
    border-bottom: 1px solid #d4d4d4;
    box-sizing: border-box;
  }

  .bycomp {
    flex: none;
    width: 38px;
    height: 12px;
    margin-left: 0.8px;
    display: flex;
    align-items: center;
    justify-content: space-between;
    box-sizing: border-box;
    border: 1px solid #999;
    background: #e8e8e8;
    padding-left: 1px;
    color: #666;
    white-space: nowrap;
  }

  .bycomp i,
  .combo i {
    width: 0;
    height: 0;
    border-left: 2px solid transparent;
    border-right: 2px solid transparent;
    border-top: 3px solid #222;
    margin-right: 2px;
  }

  .slider {
    flex: none;
    width: 105px;
    height: 11px;
    display: flex;
    flex-direction: column;
    gap: 2px;
  }

  .rail {
    position: relative;
    height: 6px;
    background: #c8c8c8;
  }

  .rail.thin {
    height: 3px;
  }

  .thumb-a {
    position: absolute;
    left: 1px;
    top: 0;
    width: 12px;
    height: 5px;
    background: #f4f4f4;
    border-right: 1px solid #333;
    border-bottom: 1px solid #333;
    box-sizing: border-box;
  }

  .thumb-b {
    position: absolute;
    right: 1px;
    top: 0;
    width: 12px;
    height: 3px;
    background: #f4f4f4;
    border-bottom: 1px solid #222;
    box-sizing: border-box;
  }

  /* result options */
  .panel {
    flex: 1;
    min-height: 0;
    overflow: hidden;
    display: flex;
    color: #555;
  }

  .col {
    flex: none;
    box-sizing: border-box;
    padding-top: 6px;
    display: flex;
    flex-direction: column;
    align-items: flex-start;
  }

  label {
    display: block;
    height: 10px;
    line-height: 10px;
    color: #666;
  }

  .col-result {
    width: 127px;
    padding-left: 2px;
  }

  .col-select {
    width: 115px;
  }

  .col-avg {
    width: 86px;
  }

  .col-filter {
    width: 57px;
    padding-left: 2px;
    border-right: 2px solid #d8d8d8;
    height: 100%;
  }

  .col-tabs {
    flex: 1;
    padding-left: 4px;
  }

  .lab-row {
    width: 120px;
    display: flex;
    justify-content: space-between;
  }

  button {
    margin: 0;
    padding: 0;
    font: inherit;
    letter-spacing: inherit;
    color: inherit;
  }

  .tiny {
    width: 10px;
    height: 9px;
    line-height: 5px;
    background: #f0f0f0;
    border: 1px solid;
    border-color: #fff #555 #555 #fff;
    font-size: 6px;
  }

  .combo {
    display: flex;
    align-items: center;
    justify-content: space-between;
    box-sizing: border-box;
    height: 14px;
    border: 1px solid;
    border-color: #777 #fff #fff #777;
    outline: 1px solid #999;
    outline-offset: -1px;
    background: linear-gradient(to left, #eee 11px, #fff 11px);
    padding-left: 2px;
    color: #3c3c3c;
  }

  .combo.off {
    background: #ececec;
    color: #999;
  }

  .wide {
    width: 108px;
    margin-left: 3px;
  }

  .wide.second {
    margin-top: 3px;
  }

  .layers {
    margin-top: 3px;
    margin-left: 3px;
    display: flex;
    align-items: center;
    height: 14px;
  }

  .layers label {
    width: 34px;
  }

  .layer-box {
    width: 46px;
    margin-right: 3px;
  }

  .check-row {
    display: flex;
    align-items: center;
    gap: 3px;
    height: 10px;
    white-space: nowrap;
  }

  .dim {
    color: #8c8c8c;
  }

  .box {
    flex: none;
    display: block;
    width: 7px;
    height: 7px;
    box-sizing: border-box;
    border: 1px solid;
    border-color: #666 #ddd #ddd #666;
    background: #fff;
  }

  .check-row .box {
    background: #f2f2f2;
  }

  .ticked .box {
    background: #d8d8d8;
    box-shadow: inset 0 0 0 1px #888;
  }

  .corner {
    margin-left: 3px;
    margin-top: 3px;
  }

  .sel-row {
    display: flex;
    margin-left: 3px;
    height: 14px;
  }

  .bev {
    background: #f0f0f0;
    border: 1px solid;
    border-color: #fff #555 #555 #fff;
    box-sizing: border-box;
    color: #555;
  }

  .arrow-btn,
  .mark {
    width: 14px;
    height: 14px;
    display: flex;
    align-items: center;
    justify-content: center;
  }

  .arrow-btn i {
    width: 0;
    height: 0;
    border-left: 2px solid transparent;
    border-right: 2px solid transparent;
    border-top: 3px solid #222;
  }

  .mark i {
    width: 0;
    height: 0;
    border-left: 1.5px solid #222;
    border-right: 3px solid #222;
    border-top: 2.5px solid transparent;
    border-bottom: 2.5px solid transparent;
  }

  .yellow {
    border: 1px solid;
    border-color: #fff #666 #666 #fff;
    background: #e0e05c;
    box-sizing: border-box;
    color: #444;
  }

  .yellow.active {
    width: 73px;
    margin: 0 1px;
    border: 1px solid #14c8d0;
  }

  .yellow.dim {
    width: 88px;
    color: #8c8c6c;
  }

  .resolved {
    margin-top: 4px;
  }

  .res-combo {
    width: 102px;
    margin-left: 6px;
    outline-color: #888;
  }

  .sys {
    margin-left: 6px;
    margin-top: 2px;
  }

  .tracking {
    height: 12px;
    margin-left: 8px;
    margin-top: 2px;
  }

  .mid {
    height: 12px;
    margin-left: 8px;
  }

  .avg {
    width: 78px;
    margin-left: 3px;
  }

  .variation {
    display: flex;
    align-items: center;
    gap: 3px;
    height: 14px;
    margin: 2px 0 0 3px;
    color: #8c8c8c;
    white-space: nowrap;
  }

  .num {
    width: 18px;
    height: 13px;
    line-height: 11px;
    box-sizing: border-box;
    border: 1px solid #bbb;
    text-align: right;
    padding-right: 2px;
    margin-left: 4px;
  }

  .avg-opts {
    width: 73px;
    height: 13px;
    margin: 5px 0 0 9px;
    color: #999;
    white-space: nowrap;
  }

  .env {
    margin-top: 3px;
  }

  .env-combo {
    margin-top: 1px;
  }

  .vf {
    width: 37px;
    margin-top: 1px;
  }

  .blank-in {
    display: block;
    width: 36px;
    height: 12px;
    margin-top: 2px;
    box-sizing: border-box;
    border: 1px solid #c0c0c0;
  }

  .blank-in.first {
    margin-top: 4px;
  }

  .cache {
    width: 50px;
    height: 14px;
    margin-top: 15px;
  }

  .apply {
    width: 50px;
    height: 14px;
    margin-top: 1px;
    margin-left: 1px;
  }

  .tabrow {
    display: flex;
    height: 13px;
    line-height: 13px;
    color: #555;
  }

  .tabrow span {
    padding: 0 2px;
    margin-right: 1px;
  }

  .tabrow .on {
    background: #fff;
    margin-top: -1px;
  }

  .tabbody {
    width: 84px;
    box-sizing: border-box;
    border: 1px solid #e4e4e4;
    border-bottom: 0;
    padding-left: 2px;
    height: 90px;
    display: flex;
    flex-direction: column;
  }

  .overlay {
    margin: 0 0 2px 2px;
    gap: 4px;
  }

  .plot-btn {
    width: 71px;
    height: 11px;
    line-height: 9px;
    margin-bottom: 1.7px;
    flex: none;
    white-space: nowrap;
    color: #444;
  }
</style>
